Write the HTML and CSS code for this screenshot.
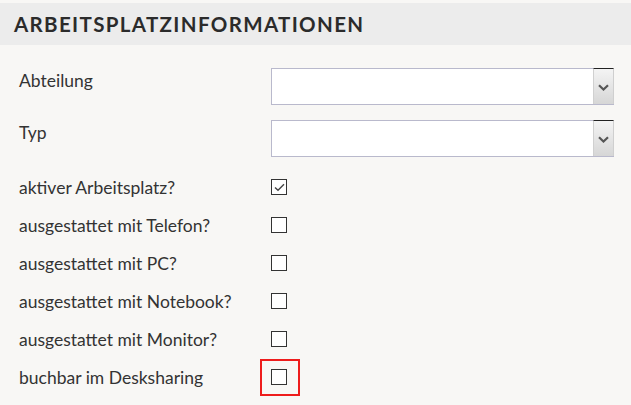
FILE: index.html
```html
<!DOCTYPE html>
<html lang="de">
<head>
<meta charset="utf-8">
<title>Arbeitsplatzinformationen</title>
<link rel="stylesheet" href="styles.css">
</head>
<body>
<div class="page">
  <div class="section-head">ARBEITSPLATZINFORMATIONEN</div>
  <div class="form">
    <div class="row row-select">
      <div class="label">Abteilung</div>
      <div class="select"><span class="select-value"></span><span class="select-btn"><svg width="11" height="7" viewBox="0 0 11 7"><path d="M1 1.2 L5.5 5.5 L10 1.2" fill="none" stroke="#555" stroke-width="2.2"/></svg></span></div>
    </div>
    <div class="row row-select">
      <div class="label">Typ</div>
      <div class="select"><span class="select-value"></span><span class="select-btn"><svg width="11" height="7" viewBox="0 0 11 7"><path d="M1 1.2 L5.5 5.5 L10 1.2" fill="none" stroke="#555" stroke-width="2.2"/></svg></span></div>
    </div>
    <div class="checks">
      <div class="row row-check">
        <div class="label">aktiver Arbeitsplatz?</div>
        <div class="ctrl"><span class="box checked"><svg width="11" height="9" viewBox="0 0 11 9"><path d="M1 4.5 L4 7.3 L10 1.3" fill="none" stroke="#444" stroke-width="1.4"/></svg></span></div>
      </div>
      <div class="row row-check">
        <div class="label">ausgestattet mit Telefon?</div>
        <div class="ctrl"><span class="box"></span></div>
      </div>
      <div class="row row-check">
        <div class="label">ausgestattet mit PC?</div>
        <div class="ctrl"><span class="box"></span></div>
      </div>
      <div class="row row-check">
        <div class="label">ausgestattet mit Notebook?</div>
        <div class="ctrl"><span class="box"></span></div>
      </div>
      <div class="row row-check">
        <div class="label">ausgestattet mit Monitor?</div>
        <div class="ctrl"><span class="box"></span></div>
      </div>
      <div class="row row-check">
        <div class="label">buchbar im Desksharing</div>
        <div class="ctrl"><span class="highlight"><span class="box"></span></span></div>
      </div>
    </div>
  </div>
</div>
</body>
</html>
```

FILE: styles.css
```css
html, body {
  margin: 0;
  padding: 0;
  background: #f8f7f5;
}
body {
  font-family: Lato, "Noto Sans", sans-serif;
  color: #333333;
}
.page {
  padding-top: 3px;
}
.section-head {
  height: 42px;
  background: #ececec;
  box-sizing: border-box;
  padding-left: 14px;
  display: flex;
  align-items: center;
  font-size: 20.5px;
  font-weight: 700;
  letter-spacing: 1.35px;
  color: #2b2b2b;
}
.form {
  padding-top: 23px;
}
.row {
  display: flex;
  align-items: center;
}
.label {
  width: 271px;
  padding-left: 19px;
  box-sizing: border-box;
  font-size: 17.5px;
  line-height: 20px;
  flex: none;
}
.row-select {
  height: 37px;
  align-items: flex-start;
}
.row-select .label {
  padding-top: 3px;
}
.row-select + .row-select {
  margin-top: 15px;
}
.select {
  width: 343px;
  height: 37px;
  box-sizing: border-box;
  border: 1px solid #b9b9cc;
  background: #ffffff;
  display: flex;
}
.select-value {
  flex: 1;
}
.select-btn {
  width: 21px;
  background: linear-gradient(#f4f4f4, #d6d6d6);
  border-left: 1px solid #d0d0d0;
  border-top: 1px solid #222;
  border-right: 1px solid #cfcfcf;
  margin: -1px -1px 0 0;
  display: flex;
  align-items: center;
  justify-content: center;
  padding-top: 2px;
  box-sizing: border-box;
}
.checks {
  margin-top: 11px;
}
.row-check {
  height: 38px;
}
.row-check .label {
  padding-top: 1px;
}
.ctrl {
  display: flex;
  align-items: center;
}
.box {
  width: 16px;
  height: 16px;
  box-sizing: border-box;
  border: 1.5px solid #333;
  background: #fff;
  display: flex;
  align-items: center;
  justify-content: center;
}
.highlight {
  margin-left: -11px;
  width: 40px;
  height: 37px;
  box-sizing: border-box;
  border: 2px solid #ee1c1c;
  display: flex;
  align-items: center;
  padding-left: 9px;
}
```
